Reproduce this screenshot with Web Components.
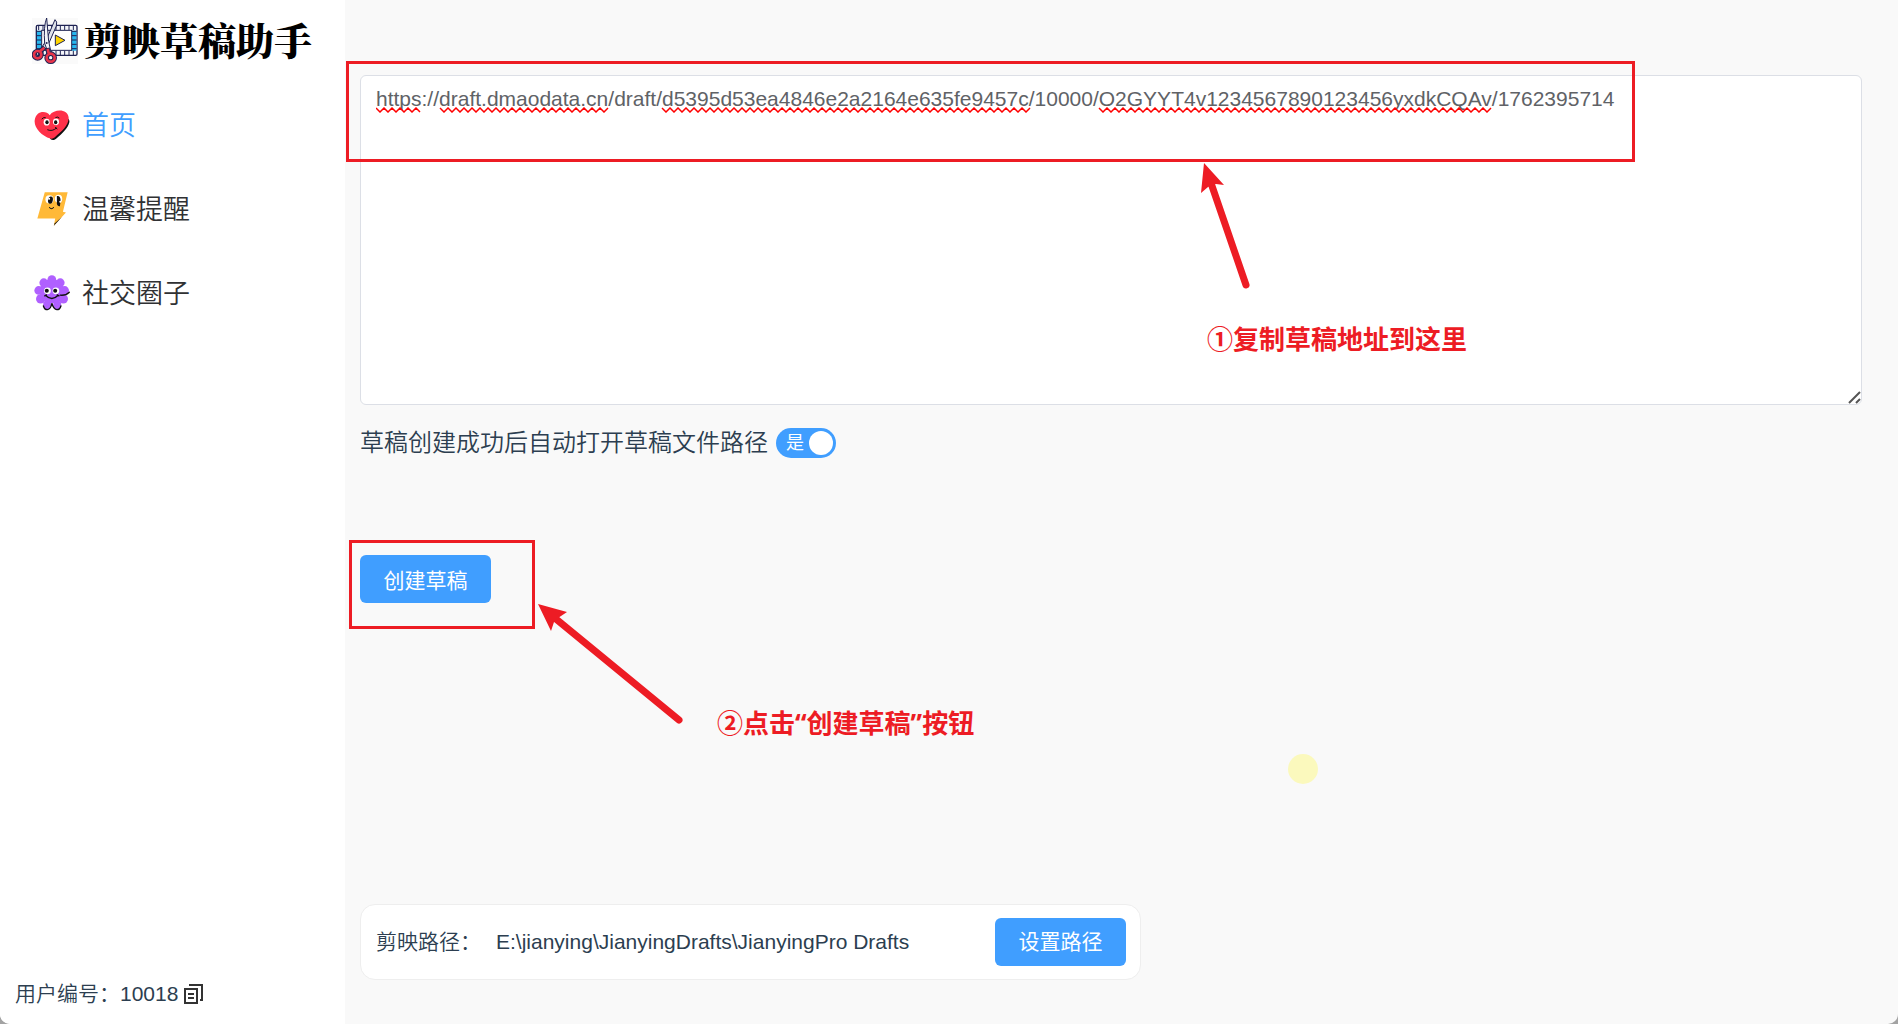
<!DOCTYPE html>
<html lang="zh-CN">
<head>
<meta charset="utf-8">
<title>剪映草稿助手</title>
<style>
  html, body { margin: 0; height: 100%; background: #a3a3a3; }
  body { font-family: "Liberation Sans", "Noto Sans CJK SC", sans-serif; font-size: 21px; color: #2c3e50; }
</style>
</head>
<body>
<draft-app>
  <side-bar slot="side">
    <app-brand slot="brand">剪映草稿助手</app-brand>
    <nav-item icon="heart" active>首页</nav-item>
    <nav-item icon="bolt">温馨提醒</nav-item>
    <nav-item icon="flower">社交圈子</nav-item>
    <user-id slot="foot" value="10018">用户编号：</user-id>
  </side-bar>
  <draft-input value="https://draft.dmaodata.cn/draft/d5395d53ea4846e2a2164e635fe9457c/10000/O2GYYT4v1234567890123456yxdkCQAv/1762395714"></draft-input>
  <toggle-row state="是">草稿创建成功后自动打开草稿文件路径</toggle-row>
  <primary-button class="create">创建草稿</primary-button>
  <path-card slot="bottom" label="剪映路径：" path="E:\jianying\JianyingDrafts\JianyingPro Drafts">
    <primary-button>设置路径</primary-button>
  </path-card>
  <guide-marks slot="overlay"></guide-marks>
</draft-app>

<script>
const define = (name, render, after) => customElements.define(name, class extends HTMLElement {
  connectedCallback() {
    if (this.shadowRoot) return;
    this.attachShadow({ mode: 'open' }).innerHTML = render(this);
    if (after) after(this);
  }
});

const ICONS = {
  heart: `<svg width="36" height="31" viewBox="-1 -1 108 92" aria-hidden="true">
    <path transform="translate(3 3)" d="M60 30C90 10 104 20 102 32C98 50 80 66 64 80C58 86 52 88 44 82Z" fill="#111"/>
    <path d="M46 14C36-1 4 0 1 30C-1 52 22 76 48 84C54 86 59 83 63 79C80 64 103 46 103 22C101-6 60-5 46 14Z" fill="#ff3049"/>
    <ellipse cx="37" cy="35" rx="9" ry="10" fill="#fff"/><ellipse cx="65" cy="34" rx="9" ry="10" fill="#fff"/>
    <ellipse cx="38" cy="35" rx="5" ry="6" fill="#111"/><ellipse cx="64" cy="35" rx="5" ry="6" fill="#111"/>
    <path d="M23 25Q28 19 33 21M64 21Q69 17 74 22M40 58Q54 64 66 53M63 51L68 55" fill="none" stroke="#111" stroke-width="3" stroke-linecap="round"/></svg>`,
  bolt: `<svg width="31" height="34" viewBox="0 0 92 101" aria-hidden="true">
    <path d="M23 1H91L77 59L86 61L50 100L54 79H1Z" fill="#ffb938"/>
    <path d="M50 100L53 93L74 74Z" fill="#111"/>
    <ellipse cx="37" cy="22" rx="12" ry="12" fill="#fff"/><ellipse cx="64" cy="20" rx="11" ry="12" fill="#fff"/>
    <ellipse cx="40" cy="24" rx="7" ry="11" fill="#111" transform="rotate(12 40 24)"/>
    <path d="M59 12Q70 10 70 26L68 42Q58 44 59 30Z" fill="#111"/><circle cx="36" cy="20" r="3" fill="#fff"/><circle cx="69" cy="29" r="3" fill="#fff"/>
    <path d="M37 46Q43 53 49 46" fill="none" stroke="#111" stroke-width="3" stroke-linecap="round"/></svg>`,
  flower: `<svg width="36" height="36" viewBox="0 0 107 107" aria-hidden="true">
    <g fill="#b060ff"><circle cx="53" cy="14" r="13"/><circle cx="29" cy="23" r="13"/><circle cx="78" cy="23" r="13"/>
    <circle cx="14" cy="46" r="13"/><circle cx="91" cy="46" r="13"/><circle cx="20" cy="71" r="14"/><circle cx="87" cy="71" r="14"/>
    <ellipse cx="39" cy="89" rx="12" ry="14"/><ellipse cx="69" cy="89" rx="12" ry="14"/><circle cx="53" cy="48" r="36"/></g>
    <path d="M78 60Q94 62 105 51M28 92Q31 103 40 103Q50 102 53 84Q58 102 68 103Q77 103 80 92" fill="none" stroke="#111" stroke-width="4" stroke-linecap="round"/>
    <circle cx="40" cy="47" r="10" fill="#fff"/><circle cx="65" cy="47" r="10" fill="#fff"/>
    <circle cx="38" cy="47" r="6" fill="#111"/><circle cx="63" cy="47" r="6" fill="#111"/>
    <path d="M35 61Q53 79 71 61M32 62L37 59M69 59L74 62" fill="none" stroke="#111" stroke-width="4" stroke-linecap="round"/></svg>`
};

define('draft-app', () => `<style>
  :host { display: flex; min-height: 100vh; position: relative; overflow: hidden; background: #f9f9f9; border-radius: 0 0 10px 10px; }
  main { flex: 1; min-width: 0; box-sizing: border-box; display: flex; flex-direction: column; padding: 75px 36px 44px 15px; }
  .bottom { margin-top: auto; }
  ::slotted(.create) { margin-top: 97px; align-self: flex-start; }
</style><slot name="side"></slot><main><slot></slot><div class="bottom"><slot name="bottom"></slot></div></main><slot name="overlay"></slot>`);

define('side-bar', () => `<style>
  :host { display: flex; flex-direction: column; flex: 0 0 345px; background: #fff; }
  nav { display: flex; flex-direction: column; }
  footer { margin-top: auto; padding: 0 15px 15px; }
</style><slot name="brand"></slot><nav><slot></slot></nav><footer><slot name="foot"></slot></footer>`);

define('app-brand', () => {
  let cells = '';
  for (let i = 0; i < 5; i++) cells += `<path d="M15 ${40 + i * 13}H28M120 ${40 + i * 13}H134"/>`;
  for (let i = 0; i < 9; i++) cells += `<path d="M${20 + i * 13} 23V36M${20 + i * 13} 98V111"/>`;
  return `<style>
  :host { display: flex; align-items: center; gap: 6px; height: 82px; padding-left: 32px; }
  svg { flex: none; }
  h1 { margin: 0; padding-bottom: 5px; font: 900 38px/46px "Noto Serif CJK SC", "Noto Sans CJK SC", serif; color: #000; white-space: nowrap; }
</style><svg width="46" height="46" viewBox="0 0 138 138" aria-hidden="true">
  <rect width="138" height="138" fill="#fafafa"/>
  <rect x="13" y="22" width="122" height="90" rx="4" fill="#f4f6fa" stroke="#1f2353" stroke-width="4"/>
  <path d="M15 38H29V98H15ZM119 38H133V98H119Z" fill="#27b7ef"/>
  <g stroke="#1f2353" stroke-width="3">${cells}</g>
  <rect x="29" y="37" width="90" height="60" fill="#fff" stroke="#1f2353" stroke-width="3"/>
  <path d="M70 51L99 67L70 83Z" fill="#ffd400" stroke="#1f2353" stroke-width="3" stroke-linejoin="round"/>
  <g stroke="#1f2353" stroke-width="3" stroke-linejoin="round">
    <path d="M69 5Q77 10 73 24L47 84L30 104L24 96L41 70Z" fill="#dfe3ea"/>
    <path d="M44 0Q34 26 38 76L48 104L56 98L50 70Z" fill="#f2f4f8"/></g>
  <g fill="none"><g stroke="#1f2353" stroke-width="14"><circle cx="17" cy="110" r="11"/><circle cx="56" cy="119" r="12"/><path d="M24 100L38 88M50 106L46 90"/></g>
  <g stroke="#e8344a" stroke-width="8"><circle cx="17" cy="110" r="11"/><circle cx="56" cy="119" r="12"/><path d="M24 100L37 89M50 106L47 92"/></g></g>
  <circle cx="44" cy="75" r="3" fill="#1f2353"/>
</svg><h1><slot></slot></h1>`;
});

define('nav-item', el => `<style>
  :host { display: block; }
  a { display: flex; align-items: center; gap: 12px; box-sizing: border-box; height: 84px; padding: 2px 0 0 34px; font-size: 27px; font-weight: 350; line-height: 40px; color: #303133; text-decoration: none; }
  :host([active]) a { color: #409eff; }
  .icon { display: flex; justify-content: center; width: 36px; }
  .text { padding-top: 1px; }
</style><a href="#"><span class="icon">${ICONS[el.getAttribute('icon')]}</span><span class="text"><slot></slot></span></a>`);

define('user-id', el => `<style>
  :host { display: flex; align-items: center; line-height: 30px; font-weight: 350; }
  button { display: flex; margin: 0 0 0 5px; padding: 0; border: 0; background: none; }
  b { font-weight: 400; }
</style><slot></slot><b>${el.getAttribute('value')}</b><button aria-label="复制"><svg width="20" height="20" viewBox="0 0 20 20" fill="none" stroke="#333" stroke-width="2"><path d="M2 5H14V19H2ZM6 1H19V16H17M5 10H11M5 14H11"/></svg></button>`);

define('draft-input', el => `<style>
  :host { display: block; position: relative; }
  textarea { display: block; box-sizing: border-box; width: 100%; height: 330px; margin: 0; padding: 7px 15px; border: 1px solid #dcdfe6; border-radius: 6px; background: #fff; color: #606266; font: 21px/32px "Liberation Sans", sans-serif; resize: none; outline: 0; }
  svg { position: absolute; pointer-events: none; }
  .spell { left: 16px; top: 32px; }
  .grip { right: 1px; bottom: 1px; }
</style><textarea aria-label="草稿地址" spellcheck="false"></textarea>
<svg class="spell" width="1130" height="6" fill="none" stroke="#f00" stroke-width="1.500"></svg>
<svg class="grip" width="13" height="13" stroke="#555" stroke-width="2"><path d="M1 12L12 1M8 12L12 8"/></svg>`, el => {
  el.shadowRoot.querySelector('textarea').value = el.getAttribute('value');
  // Wavy underline below each run the spell checker does not know.
  const wave = ([from, to]) => {
    let d = `M${from} 1`, low = true;
    for (let x = from + 4; x <= to; x += 4, low = !low) d += `L${x} ${low ? 5 : 1}`;
    return `<path d="${d}"/>`;
  };
  el.shadowRoot.querySelector('.spell').innerHTML = [[0, 46], [64, 234], [286, 654], [723, 1118]].map(wave).join('');
});

define('toggle-row', el => `<style>
  :host { display: block; margin-top: 23px; }
  label { display: inline-flex; align-items: center; gap: 8px; height: 30px; font-size: 24px; font-weight: 350; line-height: 30px; }
  .switch { display: grid; align-items: center; width: 60px; height: 30px; }
  .switch > * { grid-area: 1 / 1; }
  input { appearance: none; display: flex; justify-content: flex-end; box-sizing: border-box; width: 60px; height: 30px; margin: 0; padding: 3px; border-radius: 15px; background: #409eff; }
  input::before { content: ""; width: 24px; height: 24px; border-radius: 50%; background: #fff; }
  input:not(:checked) { justify-content: flex-start; background: #dcdfe6; }
  .state { padding-left: 10px; font-size: 18px; font-weight: 400; color: #fff; }
</style><label><slot></slot><span class="switch"><input type="checkbox" role="switch" checked><span class="state">${el.getAttribute('state')}</span></span></label>`);

define('primary-button', () => `<style>
  :host { display: block; }
  button { display: block; min-width: 131px; height: 48px; margin: 0; padding: 0 20px 1px; border: 0; border-radius: 6px; background: #409eff; color: #fff; font: inherit; font-size: 21px; font-weight: 400; }
</style><button type="button"><slot></slot></button>`);

define('path-card', el => `<style>
  :host { display: flex; align-items: center; gap: 15px; box-sizing: border-box; width: 52%; padding: 13px 14px 13px 15px; border: 1px solid #eee; border-radius: 15px; background: #fff; line-height: 30px; }
  .label { font-weight: 350; }
  .path { flex: 1; }
</style><span class="label">${el.getAttribute('label')}</span><span class="path">${el.getAttribute('path')}</span><slot></slot>`);

define('guide-marks', () => `<style>
  :host { position: absolute; inset: 0; pointer-events: none; color: #ed1c24; }
  svg, p { position: absolute; }
  svg { inset: 0; }
  p { margin: 0; font: bold 26px/36px "Noto Sans", "Noto Sans CJK SC", sans-serif; white-space: nowrap; }
  .copy { left: 1207px; top: 321px; }
  .click { left: 717px; top: 705px; }
</style><svg width="100%" height="100%" fill="none" stroke="currentColor" stroke-width="3" aria-hidden="true">
  <rect x="347.500" y="62.500" width="1286" height="98"/>
  <rect x="350.500" y="541.500" width="183" height="86"/>
  <g stroke-width="7" stroke-linecap="round"><path d="M1212 186L1246 285M556 619L679 720"/></g>
  <g fill="currentColor" stroke="none"><path d="M1204 163L1224 185L1216 184L1208 187L1201 193Z"/><path d="M538 604L567 612L558 618L554 622L551 631Z"/></g>
  <circle cx="1303" cy="769" r="15" fill="#fbf9bd" stroke="none"/>
</svg><p class="copy">①复制草稿地址到这里</p><p class="click">②点击“创建草稿”按钮</p>`);
</script>
</body>
</html>
